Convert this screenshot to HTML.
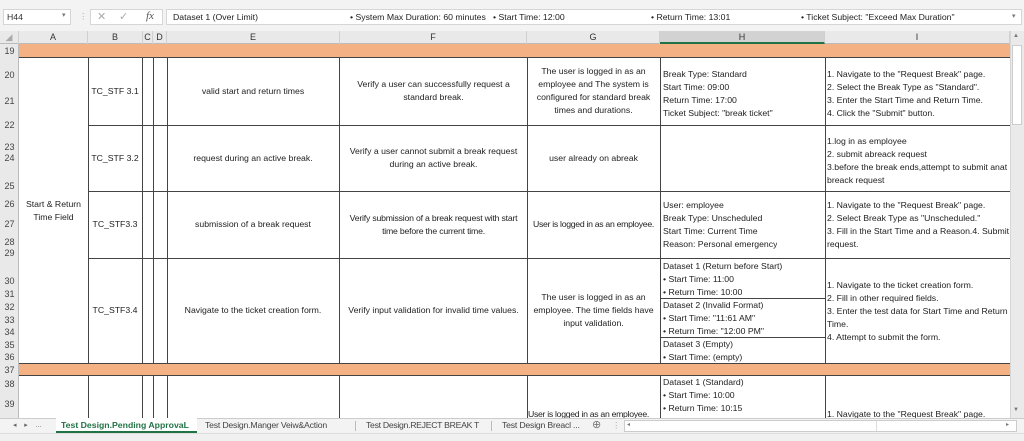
<!DOCTYPE html>
<html><head><meta charset="utf-8"><style>
*{margin:0;padding:0;box-sizing:border-box}
body{width:1024px;height:441px;overflow:hidden;background:#fff;font-family:"Liberation Sans",sans-serif;font-size:8.7px;color:#222;position:relative}
.a{position:absolute}
.t{position:absolute;white-space:nowrap}
.c{position:absolute;display:flex;align-items:center;justify-content:center;text-align:center;line-height:13px;white-space:nowrap}
.l{position:absolute;line-height:13px;white-space:nowrap;overflow:hidden}
.vl{position:absolute;width:1px;background:#444}
.hl{position:absolute;height:1px;background:#444}
.rh{position:absolute;left:0;width:19px;text-align:center;font-size:9px;color:#444}
.ch{position:absolute;top:31px;height:13px;text-align:center;font-size:9px;color:#333;line-height:13px;border-right:1px solid #d0d0d0}
.tab{position:absolute;top:420px;white-space:nowrap;overflow:hidden;color:#444;font-size:8.7px}
</style></head><body>
<div class="a" style="left:0;top:0;width:1024px;height:31px;background:#f3f3f3"></div>
<div class="a" style="left:3px;top:9px;width:68px;height:16px;background:#fff;border:1px solid #d6d6d6"></div>
<div class="t" style="left:7px;top:12px;color:#333">H44</div>
<div class="t" style="left:62px;top:11px;font-size:7px;color:#777">▾</div>
<div class="t" style="left:79px;top:11px;color:#aaa">⋮</div>
<div class="a" style="left:90px;top:9px;width:73px;height:16px;background:#fff;border:1px solid #d6d6d6"></div>
<div class="t" style="left:97px;top:10px;color:#aaa;font-size:11px">✕</div>
<div class="t" style="left:119px;top:10px;color:#aaa;font-size:11px">✓</div>
<div class="t" style="left:146px;top:10px;color:#555;font-style:italic;font-family:'Liberation Serif',serif;font-size:11px">fx</div>
<div class="a" style="left:166px;top:9px;width:856px;height:16px;background:#fff;border:1px solid #d6d6d6"></div>
<div class="t" style="left:173px;top:12px">Dataset 1 (Over Limit)</div>
<div class="t" style="left:350px;top:12px">• System Max Duration: 60 minutes&nbsp;&nbsp; • Start Time: 12:00</div>
<div class="t" style="left:651px;top:12px">• Return Time: 13:01</div>
<div class="t" style="left:801px;top:12px">• Ticket Subject: "Exceed Max Duration"</div>
<div class="t" style="left:1012px;top:12px;font-size:7px;color:#777">▾</div>
<div class="a" style="left:0;top:31px;width:1010px;height:13px;background:#e9e9e9;border-bottom:1px solid #bbb"></div>
<div class="ch" style="left:0;width:19px;color:#aaa">◢</div>
<div class="ch" style="left:19px;width:69px">A</div>
<div class="ch" style="left:88px;width:55px">B</div>
<div class="ch" style="left:143px;width:10px">C</div>
<div class="ch" style="left:153px;width:14px">D</div>
<div class="ch" style="left:167px;width:173px">E</div>
<div class="ch" style="left:340px;width:187px">F</div>
<div class="ch" style="left:527px;width:133px">G</div>
<div class="ch" style="left:660px;width:165px;background:#d2d2d2;border-bottom:2px solid #217346">H</div>
<div class="ch" style="left:825px;width:185px">I</div>
<div class="a" style="left:0;top:44px;width:19px;height:374px;background:#e9e9e9;border-right:1px solid #bbb"></div>
<div class="rh" style="top:46px">19</div><div class="rh" style="top:70px">20</div><div class="rh" style="top:96px">21</div><div class="rh" style="top:120px">22</div>
<div class="rh" style="top:142px">23</div><div class="rh" style="top:153px">24</div><div class="rh" style="top:181px">25</div>
<div class="rh" style="top:199px">26</div><div class="rh" style="top:219px">27</div><div class="rh" style="top:237px">28</div><div class="rh" style="top:248px">29</div>
<div class="rh" style="top:276px">30</div><div class="rh" style="top:289px">31</div><div class="rh" style="top:302px">32</div><div class="rh" style="top:315px">33</div><div class="rh" style="top:327px">34</div><div class="rh" style="top:340px">35</div><div class="rh" style="top:352px">36</div>
<div class="rh" style="top:365px">37</div><div class="rh" style="top:379px">38</div><div class="rh" style="top:399px">39</div>
<div class="a" style="left:19px;top:44px;width:991px;height:13px;background:#f4b183"></div>
<div class="a" style="left:19px;top:363px;width:991px;height:12px;background:#f4b183"></div>
<div class="hl" style="left:19px;top:57px;width:991px"></div>
<div class="hl" style="left:88px;top:125px;width:922px"></div>
<div class="hl" style="left:88px;top:191px;width:922px"></div>
<div class="hl" style="left:88px;top:258px;width:922px"></div>
<div class="hl" style="left:19px;top:363px;width:991px"></div>
<div class="hl" style="left:19px;top:375px;width:991px"></div>
<div class="hl" style="left:660px;top:298px;width:165px"></div>
<div class="hl" style="left:660px;top:337px;width:165px"></div>
<div class="vl" style="left:88px;top:57px;height:306px"></div><div class="vl" style="left:88px;top:375px;height:43px"></div>
<div class="vl" style="left:142px;top:57px;height:306px"></div><div class="vl" style="left:142px;top:375px;height:43px"></div>
<div class="vl" style="left:153px;top:57px;height:306px"></div><div class="vl" style="left:153px;top:375px;height:43px"></div>
<div class="vl" style="left:167px;top:57px;height:306px"></div><div class="vl" style="left:167px;top:375px;height:43px"></div>
<div class="vl" style="left:339px;top:57px;height:306px"></div><div class="vl" style="left:339px;top:375px;height:43px"></div>
<div class="vl" style="left:527px;top:57px;height:306px"></div><div class="vl" style="left:527px;top:375px;height:43px"></div>
<div class="vl" style="left:660px;top:57px;height:306px"></div><div class="vl" style="left:660px;top:375px;height:43px"></div>
<div class="vl" style="left:825px;top:57px;height:306px"></div><div class="vl" style="left:825px;top:375px;height:43px"></div>
<div class="c" style="left:19px;top:191px;width:69px;height:40px">Start &amp; Return<br>Time Field</div>
<div class="c" style="left:88px;top:57px;width:54px;height:68px">TC_STF 3.1</div>
<div class="c" style="left:167px;top:57px;width:172px;height:68px">valid start and return times</div>
<div class="c" style="left:340px;top:57px;width:187px;height:68px">Verify a user can successfully request a<br>standard break.</div>
<div class="c" style="left:527px;top:57px;width:133px;height:68px">The user is logged in as an<br>employee and The system is<br>configured for standard break<br>times and durations.</div>
<div class="l" style="left:663px;top:68px">Break Type: Standard<br>Start Time: 09:00<br>Return Time: 17:00<br>Ticket Subject: "break ticket"</div>
<div class="l" style="left:827px;top:68px;width:183px">1. Navigate to the "Request Break" page.<br>2. Select the Break Type as "Standard".<br>3. Enter the Start Time and Return Time.<br>4. Click the "Submit" button.</div>
<div class="c" style="left:88px;top:125px;width:54px;height:66px">TC_STF 3.2</div>
<div class="c" style="left:167px;top:125px;width:172px;height:66px">request during an active break.</div>
<div class="c" style="left:340px;top:125px;width:187px;height:66px">Verify a user cannot submit a break request<br>during an active break.</div>
<div class="c" style="left:527px;top:125px;width:133px;height:66px">user already on abreak</div>
<div class="l" style="left:827px;top:135px;width:183px">1.log in as employee<br>2. submit abreack request<br>3.before the break ends,attempt to submit anat<br>breack request</div>
<div class="c" style="left:88px;top:191px;width:54px;height:67px">TC_STF3.3</div>
<div class="c" style="left:167px;top:191px;width:172px;height:67px">submission of a break request</div>
<div class="c" style="left:340px;top:191px;width:187px;height:67px;letter-spacing:-0.2px">Verify submission of a break request with start<br>time before the current time.</div>
<div class="c" style="left:527px;top:191px;width:133px;height:67px;letter-spacing:-0.3px">User is logged in as an employee.</div>
<div class="l" style="left:663px;top:199px">User: employee<br>Break Type: Unscheduled<br>Start Time: Current Time<br>Reason: Personal emergency</div>
<div class="l" style="left:827px;top:199px;width:183px">1. Navigate to the "Request Break" page.<br>2. Select Break Type as "Unscheduled."<br>3. Fill in the Start Time and a Reason.4. Submit t<br>request.</div>
<div class="c" style="left:88px;top:258px;width:54px;height:105px">TC_STF3.4</div>
<div class="c" style="left:167px;top:258px;width:172px;height:105px">Navigate to the ticket creation form.</div>
<div class="c" style="left:340px;top:258px;width:187px;height:105px">Verify input validation for invalid time values.</div>
<div class="c" style="left:527px;top:258px;width:133px;height:105px">The user is logged in as an<br>employee. The time fields have<br>input validation.</div>
<div class="l" style="left:663px;top:260px">Dataset 1 (Return before Start)<br>• Start Time: 11:00<br>• Return Time: 10:00</div>
<div class="l" style="left:663px;top:299px">Dataset 2 (Invalid Format)<br>• Start Time: "11:61 AM"<br>• Return Time: "12:00 PM"</div>
<div class="l" style="left:663px;top:338px">Dataset 3 (Empty)<br>• Start Time: (empty)</div>
<div class="l" style="left:827px;top:279px;width:183px">1. Navigate to the ticket creation form.<br>2. Fill in other required fields.<br>3. Enter the test data for Start Time and Return<br>Time.<br>4. Attempt to submit the form.</div>
<div class="l" style="left:528px;top:408px;letter-spacing:-0.3px">User is logged in as an employee.</div>
<div class="l" style="left:663px;top:376px;height:42px">Dataset 1 (Standard)<br>• Start Time: 10:00<br>• Return Time: 10:15<br>• Ticket Subject: "Standard Break"</div>
<div class="l" style="left:827px;top:408px">1. Navigate to the "Request Break" page.</div>
<div class="a" style="left:1010px;top:31px;width:14px;height:387px;background:#eaeaea;border-left:1px solid #d6d6d6"></div>
<div class="a" style="left:1012px;top:45px;width:10px;height:80px;background:#fff;border:1px solid #ccc"></div>
<div class="t" style="left:1013px;top:33px;font-size:6px;color:#777">▲</div>
<div class="t" style="left:1013px;top:407px;font-size:6px;color:#777">▼</div>
<div class="a" style="left:0;top:418px;width:1024px;height:15px;background:#f3f3f3;border-top:1px solid #ccc"></div>
<div class="t" style="left:13px;top:421px;font-size:7px;color:#666">◂&nbsp;&nbsp;&nbsp;&nbsp;▸&nbsp;&nbsp;&nbsp;&nbsp;...</div>
<div class="a" style="left:56px;top:418px;width:141px;height:15px;background:#fff;border-bottom:2px solid #217346"></div>
<div class="tab" style="left:61px;width:134px;font-weight:bold;color:#217346">Test Design.Pending ApprovaL</div>
<div class="tab" style="left:205px;width:140px;letter-spacing:-0.2px">Test Design.Manger Veiw&amp;Action</div>
<div class="a" style="left:355px;top:421px;width:1px;height:10px;background:#bbb"></div>
<div class="tab" style="left:366px;width:118px;letter-spacing:-0.3px">Test Design.REJECT BREAK T</div>
<div class="a" style="left:491px;top:421px;width:1px;height:10px;background:#bbb"></div>
<div class="tab" style="left:502px;width:90px;letter-spacing:-0.2px">Test Design Breacl ...</div>
<div class="t" style="left:592px;top:418px;color:#777;font-size:11px">⊕</div>
<div class="t" style="left:612px;top:420px;color:#aaa">⋮</div>
<div class="a" style="left:624px;top:420px;width:393px;height:12px;background:#fff;border:1px solid #ccc"></div>
<div class="t" style="left:627px;top:421px;font-size:6px;color:#777">◂</div>
<div class="t" style="left:1006px;top:421px;font-size:6px;color:#777">▸</div>
<div class="a" style="left:632px;top:421px;width:245px;height:10px;background:#fff;border-right:1px solid #ddd"></div>
<div class="a" style="left:0;top:433px;width:1024px;height:8px;background:#f0f0f0;border-top:1px solid #ddd"></div>
</body></html>
